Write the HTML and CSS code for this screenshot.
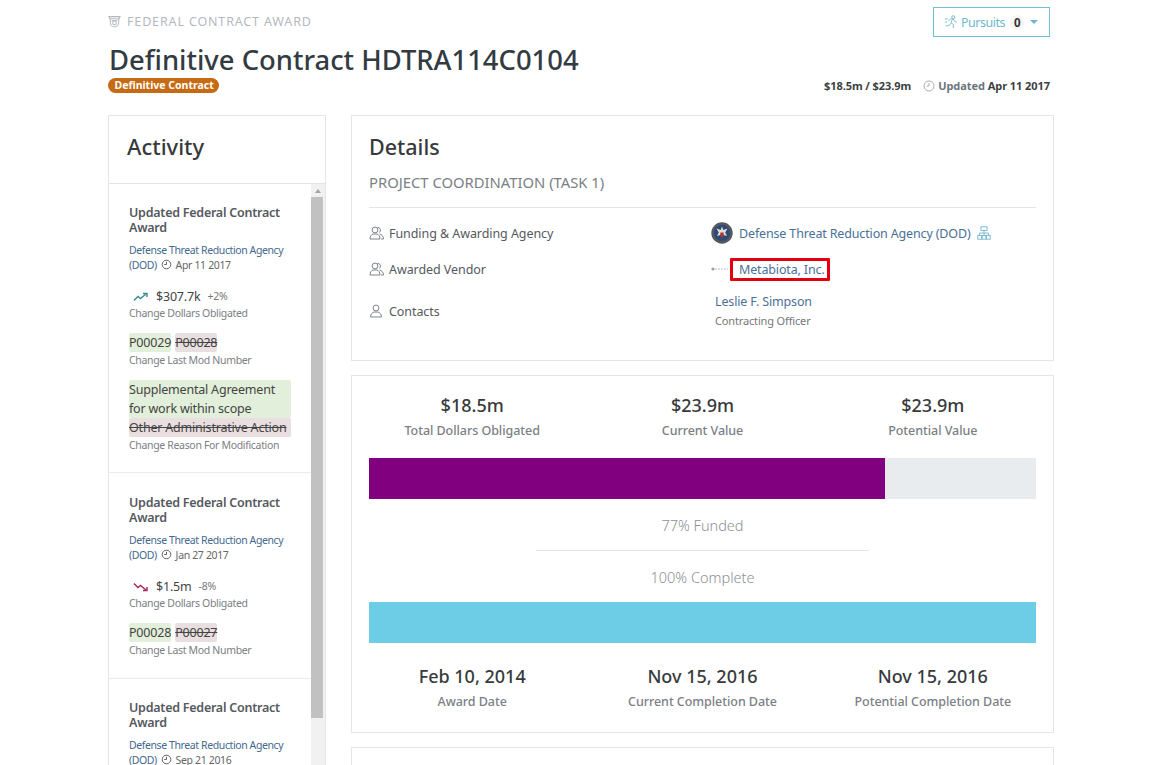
FILE: index.html
```html
<!DOCTYPE html>
<html lang="en">
<head>
<meta charset="utf-8">
<title>Definitive Contract HDTRA114C0104</title>
<link rel="stylesheet" href="styles.css">
</head>
<body>
<div class="page">
  <header class="head">
    <div class="head-top">
      <div class="eyebrow">
        <svg class="eyebrow-icon" viewBox="0 0 14 14" fill="none" stroke="currentColor" stroke-width="1.1"><path d="M1 1.200h12l-1 2.300H2z"/><path d="M2.500 3.500v4.200a4.500 4.500 0 0 0 9 0V3.500"/><circle cx="7" cy="8" r="2"/><path d="M4 5.500h6"/></svg>
        <span>FEDERAL CONTRACT AWARD</span>
      </div>
      <button class="pursuits">
        <svg class="run-icon" viewBox="0 0 16 16" fill="none" stroke="currentColor" stroke-width="1"><circle cx="10.500" cy="2.500" r="1.700"/><path d="M5 6.500l2.500-2h3l2 3 2 .5M9.500 5l-1.500 4 3 2-.5 4M7.500 9.500l-1.500 2.500-4 .5M1 4.500h3M1 8h2.500"/></svg>
        <span>Pursuits</span>
        <b class="count">0</b>
        <i class="caret"></i>
      </button>
    </div>
    <h1>Definitive Contract HDTRA114C0104</h1>
    <div class="head-bottom">
      <span class="badge">Definitive Contract</span>
      <div class="stamp">
        <b>$18.5m / $23.9m</b>
        <span class="updated">
          <svg class="clock muted" viewBox="0 0 12 12" fill="none" stroke="currentColor" stroke-width="1"><circle cx="6" cy="6" r="5"/><path d="M6 2.800V6H3.500"/></svg>
          <span class="updated-label">Updated</span> <b>Apr 11 2017</b>
        </span>
      </div>
    </div>
  </header>

  <main class="columns">
    <aside class="card activity">
      <h2 class="activity-title">Activity</h2>
      <div class="activity-body">
        <div class="feed">
          <article class="entry">
            <h3>Updated Federal Contract Award</h3>
            <p class="source"><a>Defense Threat Reduction Agency (DOD)</a> <svg class="clock" viewBox="0 0 12 12" fill="none" stroke="currentColor" stroke-width="1"><circle cx="6" cy="6" r="4.700"/><path d="M6 3v3H3.500"/></svg> Apr 11 2017</p>
            <div class="change first">
              <div class="amount"><svg class="trend up" viewBox="0 0 16 10" fill="none" stroke="currentColor" stroke-width="1.400"><path d="M1 8.500l4-4 2.500 2L13 2"/><path d="M10 1.500h4v3.500"/></svg>$307.7k <small>+2%</small></div>
              <div class="label">Change Dollars Obligated</div>
            </div>
            <div class="change">
              <div class="diff"><ins>P00029</ins> <del>P00028</del></div>
              <div class="label">Change Last Mod Number</div>
            </div>
            <div class="change">
              <div class="diff"><ins class="block">Supplemental Agreement for work within scope</ins><del class="block">Other Administrative Action</del></div>
              <div class="label">Change Reason For Modification</div>
            </div>
          </article>
          <article class="entry">
            <h3>Updated Federal Contract Award</h3>
            <p class="source"><a>Defense Threat Reduction Agency (DOD)</a> <svg class="clock" viewBox="0 0 12 12" fill="none" stroke="currentColor" stroke-width="1"><circle cx="6" cy="6" r="4.700"/><path d="M6 3v3H3.500"/></svg> Jan 27 2017</p>
            <div class="change first">
              <div class="amount"><svg class="trend down" viewBox="0 0 16 10" fill="none" stroke="currentColor" stroke-width="1.400"><path d="M1 1.500l4 4 2.500-2L13 8"/><path d="M10 8.500h4V5"/></svg>$1.5m <small>-8%</small></div>
              <div class="label">Change Dollars Obligated</div>
            </div>
            <div class="change">
              <div class="diff"><ins>P00028</ins> <del>P00027</del></div>
              <div class="label">Change Last Mod Number</div>
            </div>
          </article>
          <article class="entry">
            <h3>Updated Federal Contract Award</h3>
            <p class="source"><a>Defense Threat Reduction Agency (DOD)</a> <svg class="clock" viewBox="0 0 12 12" fill="none" stroke="currentColor" stroke-width="1"><circle cx="6" cy="6" r="4.700"/><path d="M6 3v3H3.500"/></svg> Sep 21 2016</p>
          </article>
        </div>
        <div class="scrollbar">
          <div class="scroll-up"></div>
          <div class="scroll-thumb"></div>
        </div>
      </div>
    </aside>

    <section class="main">
      <div class="card details">
        <h2>Details</h2>
        <p class="subtitle">PROJECT COORDINATION (TASK 1)</p>
        <div class="rows">
          <div class="row row-a">
            <div class="key"><svg class="person" viewBox="0 0 16 14" fill="none" stroke="currentColor" stroke-width=".9"><circle cx="6" cy="4" r="2.900"/><path d="M1 13c0-3 1.500-4.500 3-5h4c1.500.5 3 2 3 5z"/><path d="M8.500 1.300a2.900 2.900 0 0 1 1.800 5.200M10.500 8c2 .5 4 2 4 5h-2.500"/></svg>Funding &amp; Awarding Agency</div>
            <div class="val">
              <svg class="seal" viewBox="0 0 22 22"><circle cx="11" cy="11" r="10.700" fill="#55585e"/><circle cx="11" cy="11" r="8" fill="#2b4a78"/><path d="M11 4.500l1.300 3.500 4.200-1.500-2.300 4 1.800 3.500-5-1.500-5 1.500 1.800-3.500-2.300-4 4.200 1.500z" fill="#e4dfd2"/><path d="M9.300 10.500h3.400v4l-1.700 1.500-1.700-1.500z" fill="#a8343c"/></svg>
              <a>Defense Threat Reduction Agency (DOD)</a>
              <svg class="org" viewBox="0 0 14 14" fill="none" stroke="currentColor" stroke-width="1"><rect x="4" y=".8" width="6" height="3.700"/><rect x=".8" y="9.500" width="3.700" height="3.700"/><rect x="5.200" y="9.500" width="3.700" height="3.700"/><rect x="9.500" y="9.500" width="3.700" height="3.700"/><path d="M7 4.500v5M2.500 9.500V7h9v2.500"/></svg>
            </div>
          </div>
          <div class="row row-b">
            <div class="key"><svg class="person" viewBox="0 0 16 14" fill="none" stroke="currentColor" stroke-width=".9"><circle cx="6" cy="4" r="2.900"/><path d="M1 13c0-3 1.500-4.500 3-5h4c1.500.5 3 2 3 5z"/><path d="M8.500 1.300a2.900 2.900 0 0 1 1.800 5.200M10.500 8c2 .5 4 2 4 5h-2.500"/></svg>Awarded Vendor</div>
            <div class="val">
              <svg class="vendor-logo" viewBox="0 0 18 4"><circle cx="2" cy="2" r="1.600" fill="#9aa0a6"/><path d="M4 2h13" stroke="#b9bdc2" stroke-width="1" stroke-dasharray="2 1"/></svg>
              <a class="boxed">Metabiota, Inc.</a>
            </div>
          </div>
          <div class="row row-c">
            <div class="key"><svg class="person" viewBox="0 0 16 14" fill="none" stroke="currentColor" stroke-width=".9"><circle cx="7" cy="4" r="2.900"/><path d="M1.500 13c0-3 2-4.500 3.500-5h4c1.500.5 3.500 2 3.500 5z"/></svg>Contacts</div>
            <div class="val contact">
              <a>Leslie F. Simpson</a>
              <span>Contracting Officer</span>
            </div>
          </div>
        </div>
      </div>

      <div class="card figures">
        <div class="stats">
          <div class="stat"><strong>$18.5m</strong><span>Total Dollars Obligated</span></div>
          <div class="stat"><strong>$23.9m</strong><span>Current Value</span></div>
          <div class="stat"><strong>$23.9m</strong><span>Potential Value</span></div>
        </div>
        <div class="bar"><div class="fill funded" style="width:77.400%"></div></div>
        <div class="pct">77% Funded</div>
        <div class="sep"></div>
        <div class="pct">100% Complete</div>
        <div class="bar"><div class="fill complete" style="width:100%"></div></div>
        <div class="stats dates">
          <div class="stat"><strong>Feb 10, 2014</strong><span>Award Date</span></div>
          <div class="stat"><strong>Nov 15, 2016</strong><span>Current Completion Date</span></div>
          <div class="stat"><strong>Nov 15, 2016</strong><span>Potential Completion Date</span></div>
        </div>
      </div>

      <div class="card next"></div>
    </section>
  </main>
</div>
</body>
</html>
```
FILE: styles.css
```css
* { box-sizing: border-box; }
html, body { margin: 0; height: 765px; overflow: hidden; background: #fff; }
body { font-family: "Noto Sans", "Open Sans", "Liberation Sans", sans-serif; color: #373a3c; font-size: 13px; }
a { color: #4a7097; text-decoration: none; }
.page { padding: 7px 107px 0 108px; }

.head { padding-right: 4px; }
.head-top { display: flex; justify-content: space-between; align-items: flex-start; height: 30px; }
.eyebrow { display: flex; align-items: center; gap: 6px; color: #b4b9bf; font-size: 12.500px; letter-spacing: .85px; margin-top: 6px; }
.eyebrow-icon { width: 13px; height: 14px; }
.pursuits { display: flex; align-items: center; width: 117px; height: 30px; padding: 0 0 0 10px; border: 1px solid #6cc3d5; background: #fff; color: #6fb8cb; font: inherit; font-size: 12.500px; letter-spacing: -.5px; }
.run-icon { width: 14px; height: 14px; margin-right: 3px; }
.count { color: #333; background: #f6f6f6; border-radius: 8px; padding: 0 4px; margin-left: 5px; font-size: 11.500px; }
.caret { margin-left: 6px; border-top: 4px solid #6fb8cb; border-left: 4px solid transparent; border-right: 4px solid transparent; }
h1 { margin: 4px 0 0 1px; font-size: 27.400px; line-height: 37px; font-weight: 500; color: #333b42; }
.head-bottom { display: flex; justify-content: space-between; align-items: flex-start; }
.badge { background: #c66a14; color: #fff; font-size: 10.500px; font-weight: 700; line-height: 15px; padding: 0 5.500px 0 6.500px; border-radius: 8px; }
.stamp { display: flex; gap: 12px; font-size: 11px; color: #3c3f42; line-height: 16px; letter-spacing: -.07px; }
.updated { display: flex; align-items: center; gap: 3px; }
.updated-label { color: #6c757d; font-weight: 700; }
.clock { width: 11px; height: 11px; color: #555; vertical-align: -1px; margin: 0 1px 0 2px; }
.clock.muted { width: 12px; height: 12px; margin: 0; color: #a9adb2; }

.columns { display: flex; align-items: flex-start; gap: 25px; margin-top: 21px; }
.card { background: #fff; border: 1px solid #e3e5e8; }
.activity { width: 218px; flex: none; height: 800px; }
.activity-title { margin: 0; height: 68px; padding: 14px 17px 0 18px; font-size: 22px; line-height: 32px; font-weight: 500; color: #373a3c; border-bottom: 1px solid #e3e5e8; }
.activity-body { display: flex; }
.feed { flex: 1; min-width: 0; }
.entry { padding: 21px 20px 0; border-bottom: 1px solid #e9ebed; }
.entry h3 { margin: 0; font-size: 12.500px; line-height: 15px; font-weight: 600; color: #55595e; letter-spacing: -.25px; }
.source { margin: 8px 0 0; font-size: 10.500px; line-height: 15px; color: #666; letter-spacing: -.35px; }
.source a { color: #44698f; letter-spacing: -.4px; }
.change { margin-top: 12px; }
.change.first { margin-top: 15px; }
.amount { display: flex; align-items: center; font-size: 12.500px; line-height: 17px; color: #444; white-space: pre; letter-spacing: -.2px; }
.amount small { font-size: 10.500px; color: #777; margin-left: 4px; }
.trend { width: 16px; height: 10px; margin: 0 7px 0 4px; }
.trend.up { color: #3d8a8f; }
.trend.down { color: #a8265c; }
.label { font-size: 10.500px; line-height: 16px; color: #7b8085; letter-spacing: -.33px; }
.diff { font-size: 12.500px; line-height: 19px; color: #444; letter-spacing: -.2px; }
.diff ins { text-decoration: none; background: #e2efda; border-radius: 2px; padding: 1px 0; }
.diff del { background: #eadfe0; border-radius: 2px; padding: 1px 0; }
.diff ins.block, .diff del.block { padding: 0; }
.diff del:not(.block) { margin-left: 1px; }
.block { display: block; }
.scrollbar { width: 14px; flex: none; background: #f1f1f1; height: 620px; }
.scroll-up { height: 13px; display: flex; justify-content: center; align-items: center; }
.scroll-up::before { content: ""; border-bottom: 4px solid #a3a3a3; border-left: 3px solid transparent; border-right: 3px solid transparent; }
.scroll-thumb { width: 12px; height: 521px; background: #c1c1c1; }
.entry:nth-child(1) { height: 289px; }
.entry:nth-child(2) { height: 206px; padding-top: 22px; }

.main { flex: 1; min-width: 0; display: flex; flex-direction: column; gap: 14px; }
.details { height: 246px; padding: 14px 17px 0; }
.details h2 { margin: 0; font-size: 21.500px; line-height: 34px; font-weight: 500; color: #373a3c; }
.subtitle { margin: 8px 0 0; padding-bottom: 15px; font-size: 14.800px; line-height: 20px; color: #7b8085; border-bottom: 1px solid #e3e5e8; }
.rows { font-size: 12.500px; color: #55595e; letter-spacing: -.07px; }
.row { display: flex; align-items: center; }
.row-a { height: 50px; }
.row-b { height: 22px; }
.row-c { height: 62px; }
.key { width: 342px; flex: none; display: flex; align-items: center; }
.person { width: 16px; height: 14px; margin-right: 4px; color: #72777c; }
.val { display: flex; align-items: center; letter-spacing: -.15px; }
.seal { width: 22px; height: 22px; margin-right: 6px; }
.org { width: 14px; height: 14px; margin-left: 6px; color: #7fbcd2; }
.vendor-logo { width: 18px; height: 4px; margin-right: 1px; }
.boxed { border: 3px solid #e0000f; padding: 0 2px 0 6px; line-height: 17px; border-radius: 1px; }
.contact { flex-direction: column; align-items: flex-start; padding-left: 4px; margin-top: 1px; }
.contact a { line-height: 18px; }
.contact span { font-size: 11px; line-height: 19px; color: #777; }

.figures { height: 358px; padding: 15px 17px 0; }
.stats { display: grid; grid-template-columns: repeat(3, 1fr); margin: 0 -12px; }
.stat { display: flex; flex-direction: column; align-items: center; }
.stat strong { font-size: 18px; line-height: 28px; font-weight: 500; color: #373a3c; }
.stat span { font-size: 12.500px; line-height: 23px; font-weight: 500; color: #7b8085; letter-spacing: -.05px; }
.bar { height: 41px; background: #e9ecef; margin-top: 16px; }
.fill { height: 100%; }
.funded { background: #800080; }
.complete { background: #6dcce6; }
.pct { text-align: center; font-size: 14.500px; line-height: 20px; color: #8b9095; margin: 16px 0 0; font-weight: 300; }
.sep { width: 333px; height: 1px; background: #e3e5e8; margin: 15px auto 0; }
.sep + .pct { margin-top: 16px; }
.pct + .bar { margin-top: 15px; }
.dates { margin-top: 19px; }
.next { height: 60px; }
```
